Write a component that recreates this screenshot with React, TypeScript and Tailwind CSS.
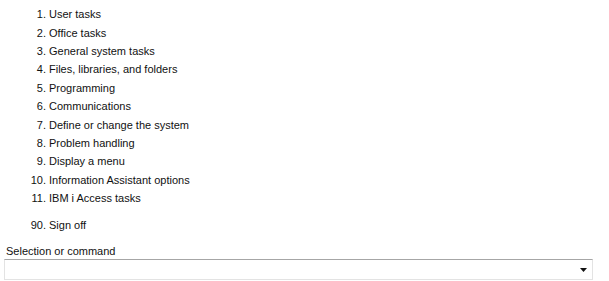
import React from "react";

const items: [string, string][] = [
  ["1.", "User tasks"],
  ["2.", "Office tasks"],
  ["3.", "General system tasks"],
  ["4.", "Files, libraries, and folders"],
  ["5.", "Programming"],
  ["6.", "Communications"],
  ["7.", "Define or change the system"],
  ["8.", "Problem handling"],
  ["9.", "Display a menu"],
  ["10.", "Information Assistant options"],
  ["11.", "IBM i Access tasks"],
];

function Row({ n, t }: { n: string; t: string }) {
  return (
    <div className="flex h-[18.4px] items-center leading-[18.4px]">
      <span className="w-[46px] text-right">{n}</span>
      <span className="ml-[3px]">{t}</span>
    </div>
  );
}

export default function App() {
  return (
    <div
      className="w-[609px] h-[281px] bg-white text-[11px] text-[#111] overflow-hidden"
      style={{ fontFamily: '"Liberation Sans", Arial, sans-serif' }}
    >
      <div className="pt-[5.2px]">
        {items.map(([n, t]) => (
          <Row key={n} n={n} t={t} />
        ))}
        <div className="mt-[8.6px]">
          <Row n="90." t="Sign off" />
        </div>
      </div>
      <div className="mt-[10px] pl-[6px] leading-[14px] h-[14px]">Selection or command</div>
      <div className="ml-[4px] mt-[0.4px] w-[589px] h-[21px] border border-[#e3e3e3] border-t-[#a6a6a6] bg-white flex items-center justify-end pr-[5px]">
        <svg width="7" height="4" viewBox="0 0 7 4" className="mt-[1px]">
          <polygon points="0,0 7,0 3.5,4" fill="#111" />
        </svg>
      </div>
    </div>
  );
}
